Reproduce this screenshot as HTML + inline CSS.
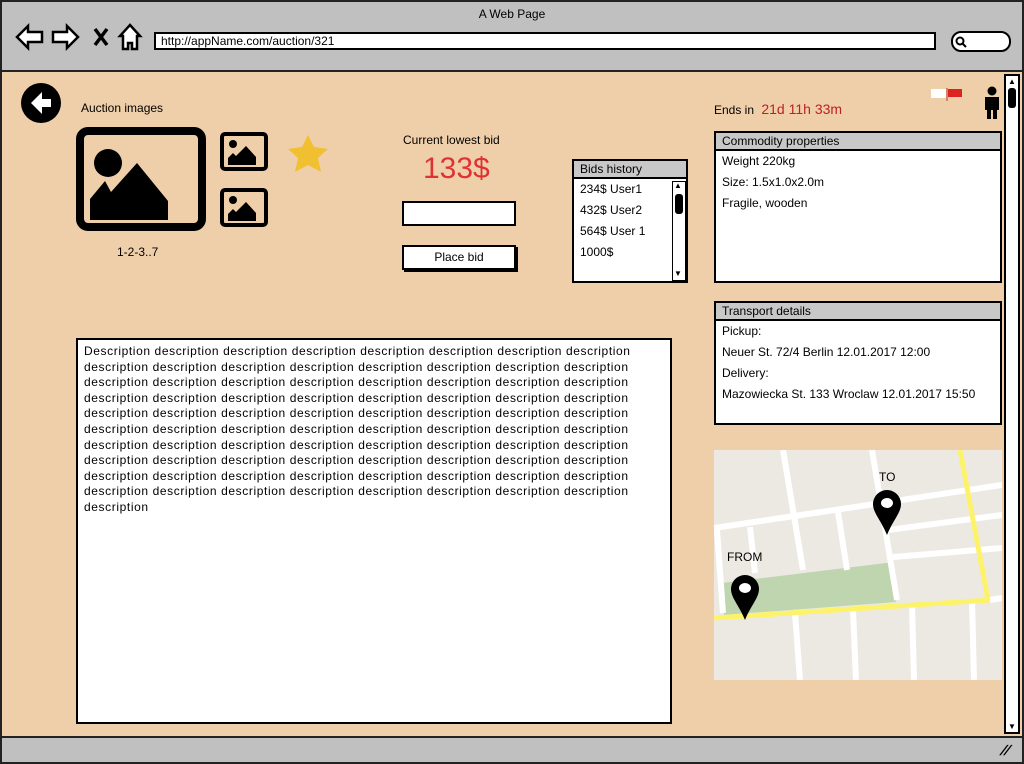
<!DOCTYPE html>
<html><head><meta charset="utf-8"><style>
*{margin:0;padding:0;box-sizing:border-box}
body{width:1024px;height:764px;overflow:hidden;font-family:"Liberation Sans",sans-serif;background:#fff;position:relative}
.a{position:absolute}
.t{font-size:12px;color:#000;white-space:nowrap}
.box{position:absolute;background:#fff;border:2px solid #000}
.hdr{background:#c8c8c8;border-bottom:2px solid #000;font-size:12px;padding:1px 6px;height:18px}
.row{font-size:12px;padding:0 6px;height:21px;line-height:21px}
</style></head><body>
<div class="a" style="left:0;top:0;width:1024px;height:764px;border:2px solid #222;background:#efcfa9"></div>
<div class="a" style="left:2px;top:2px;width:1020px;height:70px;background:#c0c0c0;border-bottom:2px solid #222"></div>
<div class="a t" style="left:0;width:1024px;top:7px;text-align:center">A Web Page</div>
<svg class="a" style="left:14px;top:22px" width="130" height="30" viewBox="0 0 130 30">
<path d="M3 15 L14 4 V10 H28 V20 H14 V26 Z" fill="#fff" stroke="#000" stroke-width="2.5"/>
<path d="M77 15 L66 4 V10 H52 V20 H66 V26 Z" transform="translate(-13 0)" fill="#fff" stroke="#000" stroke-width="2.5"/>
<path d="M81 7 L93 23 M93 7 L81 23" stroke="#000" stroke-width="3.5"/>
<path d="M116 3 L106 14 H109 V27 H114 V21 H118 V27 H123 V14 H126 Z" fill="#fff" stroke="#000" stroke-width="2.5"/>
</svg>
<div class="a" style="left:154px;top:32px;width:782px;height:18px;background:#fff;border:2px solid #000;font-size:12px;padding-left:5px;line-height:14px">http://appName.com/auction/321</div>
<div class="a" style="left:951px;top:31px;width:60px;height:21px;background:#fff;border:2px solid #000;border-radius:10px"></div>
<svg class="a" style="left:955px;top:36px" width="12" height="12"><circle cx="5" cy="5" r="3.5" fill="none" stroke="#000" stroke-width="2"/><path d="M7.5 7.5 L11 11" stroke="#000" stroke-width="2"/></svg>
<div class="a" style="left:1004px;top:74px;width:16px;height:660px;background:#fff;border:2px solid #000"></div>
<div class="a" style="left:1008px;top:88px;width:8px;height:20px;background:#000;border-radius:3px"></div>
<div class="a" style="left:1008px;top:77px;font-size:8px">▲</div>
<div class="a" style="left:1008px;top:722px;font-size:8px">▼</div>
<div class="a" style="left:2px;top:736px;width:1020px;height:26px;background:#c0c0c0;border-top:2px solid #222"></div>
<div class="a" style="left:1002px;top:742px;font-size:14px;font-weight:bold;transform:skewX(-30deg)">//</div>
<svg class="a" style="left:20px;top:82px" width="42" height="42"><circle cx="21" cy="21" r="20" fill="#000"/><path d="M22 10 L11 21 L22 32 V25 H31 V17 H22 Z" fill="#fff"/></svg>
<div class="a t" style="left:81px;top:101px">Auction images</div>
<div class="a t" style="left:714px;top:101px">Ends in <span style="color:#b22;font-size:14px;margin-left:4px">21d 11h 33m</span></div>
<svg class="a" style="left:930px;top:87px" width="34" height="14"><path d="M1 2 H16 V11 H1Z" fill="#fff"/><path d="M17 1 V14" stroke="#b33" stroke-width="1"/><path d="M18 2 H32 V10 H18Z" fill="#d22"/></svg>
<svg class="a" style="left:982px;top:86px" width="20" height="34"><circle cx="10" cy="5" r="4.5"/><path d="M3 11 H17 V24 H15 V33 H11 V24 H9 V33 H5 V24 H3Z"/></svg>
<svg class="a" style="left:76px;top:127px" width="256" height="104">
<rect x="4" y="4" width="122" height="96" rx="8" fill="none" stroke="#000" stroke-width="8"/>
<circle cx="32" cy="36" r="14"/><path d="M14 93 V72 L29 54 L35 65 L61 36 L92 74 V93Z"/>
<rect x="146" y="7" width="44" height="35" rx="3" fill="none" stroke="#000" stroke-width="4"/>
<circle cx="157" cy="17" r="4"/><path d="M152 38 V31 L157 26 L160 29 L170 19 L180 30 V38Z"/>
<rect x="146" y="63" width="44" height="35" rx="3" fill="none" stroke="#000" stroke-width="4"/>
<circle cx="157" cy="73" r="4"/><path d="M152 94 V87 L157 82 L160 85 L170 75 L180 86 V94Z"/>
<path d="M232 8 L238 20 L252 22 L242 31 L245 45 L232 38 L219 45 L222 31 L212 22 L226 20Z" fill="#f0c030"/>
</svg>
<div class="a t" style="left:117px;top:245px">1-2-3..7</div>
<div class="a t" style="left:403px;top:133px">Current lowest bid</div>
<div class="a" style="left:423px;top:152px;font-size:30px;color:#d33">133$</div>
<div class="box" style="left:402px;top:201px;width:114px;height:25px"></div>
<div class="box" style="left:402px;top:245px;width:114px;height:25px;box-shadow:2px 2px 0 #000;font-size:12px;text-align:center;line-height:21px">Place bid</div>
<div class="box" style="left:572px;top:159px;width:116px;height:124px">
<div class="hdr" style="padding-left:6px">Bids history</div>
<div class="row">234$ User1</div><div class="row">432$ User2</div><div class="row">564$ User 1</div><div class="row">1000$</div>
<div class="a" style="left:98px;top:20px;width:14px;height:100px;border:1.5px solid #000"></div>
<div class="a" style="left:101px;top:33px;width:8px;height:20px;background:#000;border-radius:3px"></div>
<div class="a" style="left:100px;top:20px;font-size:8px">▲</div><div class="a" style="left:100px;top:108px;font-size:8px">▼</div>
</div>
<div class="box" style="left:714px;top:131px;width:288px;height:152px">
<div class="hdr">Commodity properties</div>
<div class="row">Weight 220kg</div><div class="row">Size: 1.5x1.0x2.0m</div><div class="row">Fragile, wooden</div>
</div>
<div class="box" style="left:714px;top:301px;width:288px;height:124px">
<div class="hdr">Transport details</div>
<div class="row">Pickup:</div><div class="row">Neuer St. 72/4 Berlin 12.01.2017 12:00</div><div class="row">Delivery:</div><div class="row">Mazowiecka St. 133 Wroclaw 12.01.2017 15:50</div>
</div>
<div class="box" style="left:76px;top:338px;width:596px;height:386px;font-size:12px;line-height:15.6px;padding:4px 6px;letter-spacing:0.6px;white-space:normal">Description description description description description description description description description description description description description description description description description description description description description description description description description description description description description description description description description description description description description description description description description description description description description description description description description description description description description description description description description description description description description description description description description description description description description description description description description description description description description description description description description</div>
<svg class="a" style="left:714px;top:450px" width="288" height="230" viewBox="0 0 288 230">
<rect width="288" height="230" fill="#ece9e2"/>
<path d="M8 133 L180 112 L182 152 L10 165Z" fill="#bfd5b0"/>
<g stroke="#fff" stroke-width="6" fill="none">
<path d="M0 78 L288 35"/><path d="M69 0 L89 120"/><path d="M81 163 L86 230"/><path d="M158 0 L183 150"/>
<path d="M174 80 L288 65"/><path d="M179 107 L288 98"/><path d="M36 77 L41 123"/><path d="M124 62 L133 120"/>
<path d="M3 80 L9 163"/><path d="M139 160 L142 230"/><path d="M198 155 L200 230"/><path d="M258 150 L260 230"/><path d="M276 150 L288 148"/>
</g>
<g stroke="#fdf36a" stroke-width="5" fill="none"><path d="M0 168 L276 150"/><path d="M246 0 L274 150"/></g>
<g><path d="M173 40 a14 14 0 0 1 14 14 c0 9 -8 16 -14 31 c-6 -15 -14 -22 -14 -31 a14 14 0 0 1 14 -14z"/><ellipse cx="173" cy="53" rx="6" ry="5" fill="#fff"/>
<path d="M31 125 a14 14 0 0 1 14 14 c0 9 -8 16 -14 31 c-6 -15 -14 -22 -14 -31 a14 14 0 0 1 14 -14z"/><ellipse cx="31" cy="138" rx="6" ry="5" fill="#fff"/></g>
<text x="165" y="31" font-size="12" font-family="Liberation Sans">TO</text>
<text x="13" y="111" font-size="12" font-family="Liberation Sans">FROM</text>
</svg>
</body></html>
